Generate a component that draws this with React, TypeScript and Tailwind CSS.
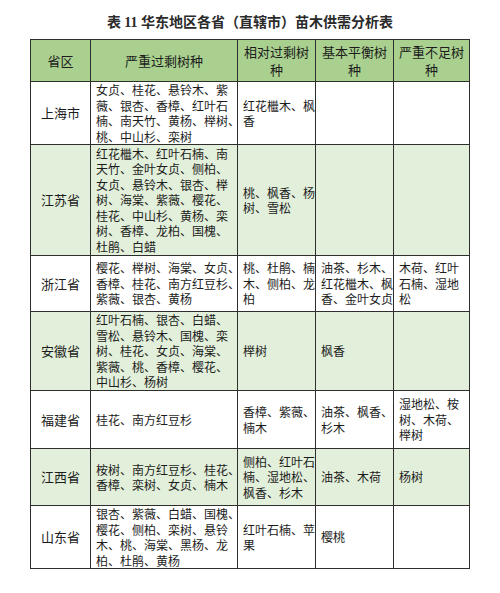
const FONT = '"Noto Sans CJK SC", "Noto Sans", sans-serif';

type Row = {
    province: string;
    tint: boolean;
    height: string;
    cells: string[][];
};

const HEADERS: string[][] = [
    ["省区"],
    ["严重过剩树种"],
    ["相对过剩树", "种"],
    ["基本平衡树", "种"],
    ["严重不足树", "种"],
];

const ROWS: Row[] = [
    {
        province: "上海市",
        tint: false,
        height: "h-[61px]",
        cells: [
            ["女贞、桂花、悬铃木、紫", "薇、银杏、香樟、红叶石", "楠、南天竹、黄杨、榉树、", "桃、中山杉、栾树"],
            ["红花檵木、枫", "香"],
            [],
            [],
        ],
    },
    {
        province: "江苏省",
        tint: true,
        height: "h-[111px]",
        cells: [
            [
                "红花檵木、红叶石楠、南",
                "天竹、金叶女贞、侧柏、",
                "女贞、悬铃木、银杏、榉",
                "树、海棠、紫薇、樱花、",
                "桂花、中山杉、黄杨、栾",
                "树、香樟、龙柏、国槐、",
                "杜鹃、白蜡",
            ],
            ["桃、枫香、杨", "树、雪松"],
            [],
            [],
        ],
    },
    {
        province: "浙江省",
        tint: false,
        height: "h-[56px]",
        cells: [
            ["樱花、榉树、海棠、女贞、", "香樟、桂花、南方红豆杉、", "紫薇、银杏、黄杨"],
            ["桃、杜鹃、楠", "木、侧柏、龙", "柏"],
            ["油茶、杉木、", "红花檵木、枫", "香、金叶女贞"],
            ["木荷、红叶", "石楠、湿地", "松"],
        ],
    },
    {
        province: "安徽省",
        tint: true,
        height: "h-[79px]",
        cells: [
            ["红叶石楠、银杏、白蜡、", "雪松、悬铃木、国槐、栾", "树、桂花、女贞、海棠、", "紫薇、桃、香樟、樱花、", "中山杉、杨树"],
            ["榉树"],
            ["枫香"],
            [],
        ],
    },
    {
        province: "福建省",
        tint: false,
        height: "h-[58px]",
        cells: [
            ["桂花、南方红豆杉"],
            ["香樟、紫薇、", "楠木"],
            ["油茶、枫香、", "杉木"],
            ["湿地松、桉", "树、木荷、", "榉树"],
        ],
    },
    {
        province: "江西省",
        tint: true,
        height: "h-[57px]",
        cells: [
            ["桉树、南方红豆杉、桂花、", "香樟、栾树、女贞、楠木"],
            ["侧柏、红叶石", "楠、湿地松、", "枫香、杉木"],
            ["油茶、木荷"],
            ["杨树"],
        ],
    },
    {
        province: "山东省",
        tint: false,
        height: "h-[63px]",
        cells: [
            ["银杏、紫薇、白蜡、国槐、", "樱花、侧柏、栾树、悬铃", "木、桃、海棠、黑杨、龙", "柏、杜鹃、黄杨"],
            ["红叶石楠、苹", "果"],
            ["樱桃"],
            [],
        ],
    },
];

function Lines({ lines }: { lines: string[] }) {
    return (
        <>
            {lines.map((line, i) => (
                <div key={i} className="whitespace-nowrap">
                    {line}
                </div>
            ))}
        </>
    );
}

export default function App() {
    const cellBorder = "border-[1.5px] border-[#2e2e2e]";

    return (
        <div className="w-[500px] h-[593px] bg-white pt-[13px]" style={{ fontFamily: FONT }}>
            {/* Caption */}
            <h1
                className="text-center text-[14px] leading-[20px] font-semibold text-[#2a2a2a] mb-[6px]"
                style={{ fontFamily: '"Liberation Serif", "Noto Sans CJK SC", serif' }}
            >
                表 11 华东地区各省（直辖市）苗木供需分析表
            </h1>

            <table className="ml-[30px] border-collapse table-fixed w-[439px] text-[12px] leading-[15.5px] text-[#1c1c1c]">
                <colgroup>
                    <col className="w-[60px]" />
                    <col className="w-[147px]" />
                    <col className="w-[78px]" />
                    <col className="w-[78px]" />
                    <col className="w-[76px]" />
                </colgroup>
                <thead>
                    <tr className="h-[42px] bg-[#a9d08e]">
                        {HEADERS.map((h, i) => (
                            <th key={i} className={`${cellBorder} font-normal text-[13px] leading-[18px] text-center align-middle text-[#1c1c1c]`}>
                                <Lines lines={h} />
                            </th>
                        ))}
                    </tr>
                </thead>
                <tbody>
                    {ROWS.map((row) => (
                        <tr key={row.province} className={`${row.height} ${row.tint ? "bg-[#e2efda]" : "bg-white"}`}>
                            <td className={`${cellBorder} text-center align-middle text-[13px]`}>{row.province}</td>
                            {row.cells.map((lines, i) => (
                                <td key={i} className={`${cellBorder} align-middle pl-[5px] pr-0 overflow-visible`}>
                                    <Lines lines={lines} />
                                </td>
                            ))}
                        </tr>
                    ))}
                </tbody>
            </table>
        </div>
    );
}
